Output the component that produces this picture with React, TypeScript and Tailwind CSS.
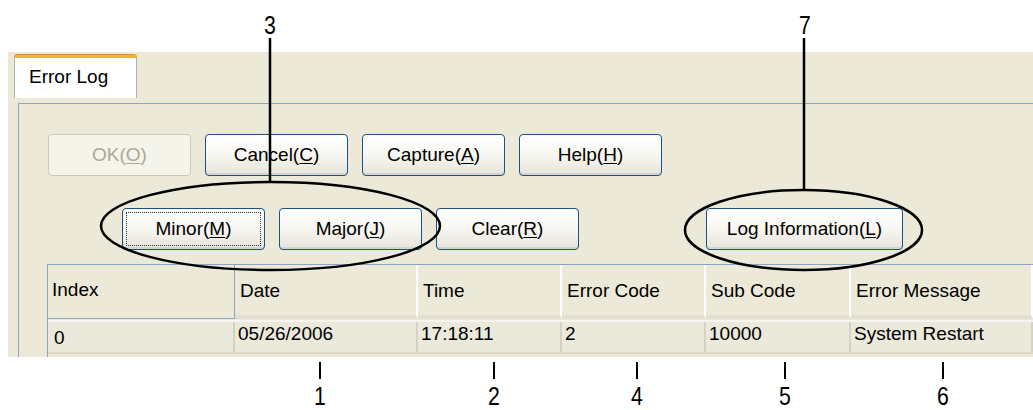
import React from 'react';

// XP-style "Error Log" dialog with numbered callouts (manual figure).

type BtnProps = {
  pre: string;
  key_: string;
  post?: string;
  w?: string;
  disabled?: boolean;
  focused?: boolean;
};

const XpButton: React.FC<BtnProps> = ({ pre, key_, post = ')', w = 'w-[143px]', disabled, focused }) => (
  <div
    className={`relative ${w} h-[42px] shrink-0 rounded-[4px] border flex items-center justify-center text-[19px] ${
      disabled
        ? 'border-[#cac8bb] bg-[#f5f4ea] text-[#aca899]'
        : 'border-[#1c5180] bg-linear-to-b from-[#ffffff] via-[#f7f6f1] to-[#e6e4da] text-black shadow-[inset_0_-2px_0_#d8d5c8]'
    }`}
  >
    {focused && <span className="absolute inset-[3px] border border-dotted border-[#333]" />}
    <span>
      {pre}
      <span className="underline underline-offset-2">{key_}</span>
      {post}
    </span>
  </div>
);

const cols = [
  { name: 'Index', w: 'w-[187px]', val: '0' },
  { name: 'Date', w: 'w-[183px]', val: '05/26/2006' },
  { name: 'Time', w: 'w-[144px]', val: '17:18:11' },
  { name: 'Error Code', w: 'w-[144px]', val: '2' },
  { name: 'Sub Code', w: 'w-[145px]', val: '10000' },
  { name: 'Error Message', w: 'flex-1', val: 'System Restart' },
];

export default function App() {
  return (
    <div
      className="relative w-[1033px] h-[410px] bg-white overflow-hidden"
      style={{ fontFamily: '"Liberation Sans", Arial, sans-serif' }}
    >
      <div className="h-[52px]" />

      {/* Dialog surface */}
      <div className="ml-[8px] h-[305px] bg-[#ece9d8] flex flex-col overflow-hidden">
        {/* Tab strip */}
        <div className="h-[46px] pl-[6px] pt-[2px] flex">
          <div className="w-[123px] h-[44px] bg-white border-x border-[#aab2b8] rounded-t-[4px] flex flex-col">
            <div className="h-[4px] -mx-px rounded-t-[4px] bg-[#f4b43a] border-t border-[#e68b2c]" />
            <div className="pl-[14px] pt-[5px] text-[19px] text-black">Error Log</div>
          </div>
        </div>

        {/* Tab page */}
        <div className="mt-[5px] ml-[10px] flex-1 border-l border-t border-[#8aa6c4] flex flex-col">
          <div className="pl-[29px] pt-[30px] flex gap-[14px]">
            <XpButton pre="OK(" key_="O" disabled />
            <XpButton pre="Cancel(" key_="C" />
            <XpButton pre="Capture(" key_="A" />
            <XpButton pre="Help(" key_="H" />
          </div>
          <div className="pl-[103px] pt-[32px] flex">
            <div className="flex gap-[14px]">
              <XpButton pre="Minor(" key_="M" focused />
              <XpButton pre="Major(" key_="J" />
              <XpButton pre="Clear(" key_="R" />
            </div>
            <div className="ml-[127px]">
              <XpButton pre="Log Information(" key_="L" w="w-[197px]" />
            </div>
          </div>

          {/* Grid */}
          <div className="ml-[28px] mt-[14px] flex-1 border-t border-l border-[#8aa6c4] flex flex-col">
            <div className="h-[54px] flex">
              {cols.map((c, i) => (
                <div
                  key={c.name}
                  className={`${c.w} h-full flex items-center ${
                    i === 0
                      ? 'border border-t-0 border-l-0 border-[#8aa6c4] pl-[4px] pb-[3px]'
                      : 'pl-[5px] pb-[2px] border-r-2 border-r-white border-b-[4px] border-b-[#e2dfd2] pt-[5px]'
                  } text-[19px] text-black`}
                >
                  {c.name}
                </div>
              ))}
            </div>
            <div className="h-[34px] mt-[1px] flex bg-[#ebe8dc] border-t-2 border-t-[#f6f5ef] border-b-2 border-b-[#dcd8c9]">
              {cols.map((c, i) => (
                <div
                  key={c.name}
                  className={`${c.w} h-full flex ${
                    i === 0 ? 'items-center pl-[6px] pt-[2px]' : 'items-start pl-[3px]'
                  } border-r-2 border-r-[#d6d2c3] text-[19px] leading-[24px] text-black`}
                >
                  {c.val}
                </div>
              ))}
            </div>
          </div>
        </div>
      </div>

      {/* Callout annotations */}
      <svg className="absolute inset-0 pointer-events-none" width="1033" height="410" aria-hidden>
        <g stroke="black" strokeWidth="2.5" fill="none">
          <line x1="270" y1="38" x2="270" y2="182" />
          <ellipse cx="270.5" cy="226" rx="169.5" ry="44" />
          <line x1="804" y1="38" x2="804" y2="190" />
          <ellipse cx="803.5" cy="230" rx="118.5" ry="40" />
        </g>
        <g stroke="black" strokeWidth="2">
          {[320, 494, 637, 785, 943].map((x) => (
            <line key={x} x1={x} y1="362" x2={x} y2="379" />
          ))}
        </g>
      </svg>
      {[
        { n: '3', x: 'left-[270px]', y: 'top-[15px]' },
        { n: '7', x: 'left-[805px]', y: 'top-[15px]' },
        { n: '1', x: 'left-[320px]', y: 'top-[386px]' },
        { n: '2', x: 'left-[494px]', y: 'top-[386px]' },
        { n: '4', x: 'left-[637px]', y: 'top-[386px]' },
        { n: '5', x: 'left-[785px]', y: 'top-[386px]' },
        { n: '6', x: 'left-[943px]', y: 'top-[386px]' },
      ].map((l) => (
        <div
          key={l.n}
          className={`absolute ${l.x} ${l.y} -translate-x-1/2 text-[25px] leading-[20px] text-black scale-x-[0.85]`}
        >
          {l.n}
        </div>
      ))}
    </div>
  );
}
